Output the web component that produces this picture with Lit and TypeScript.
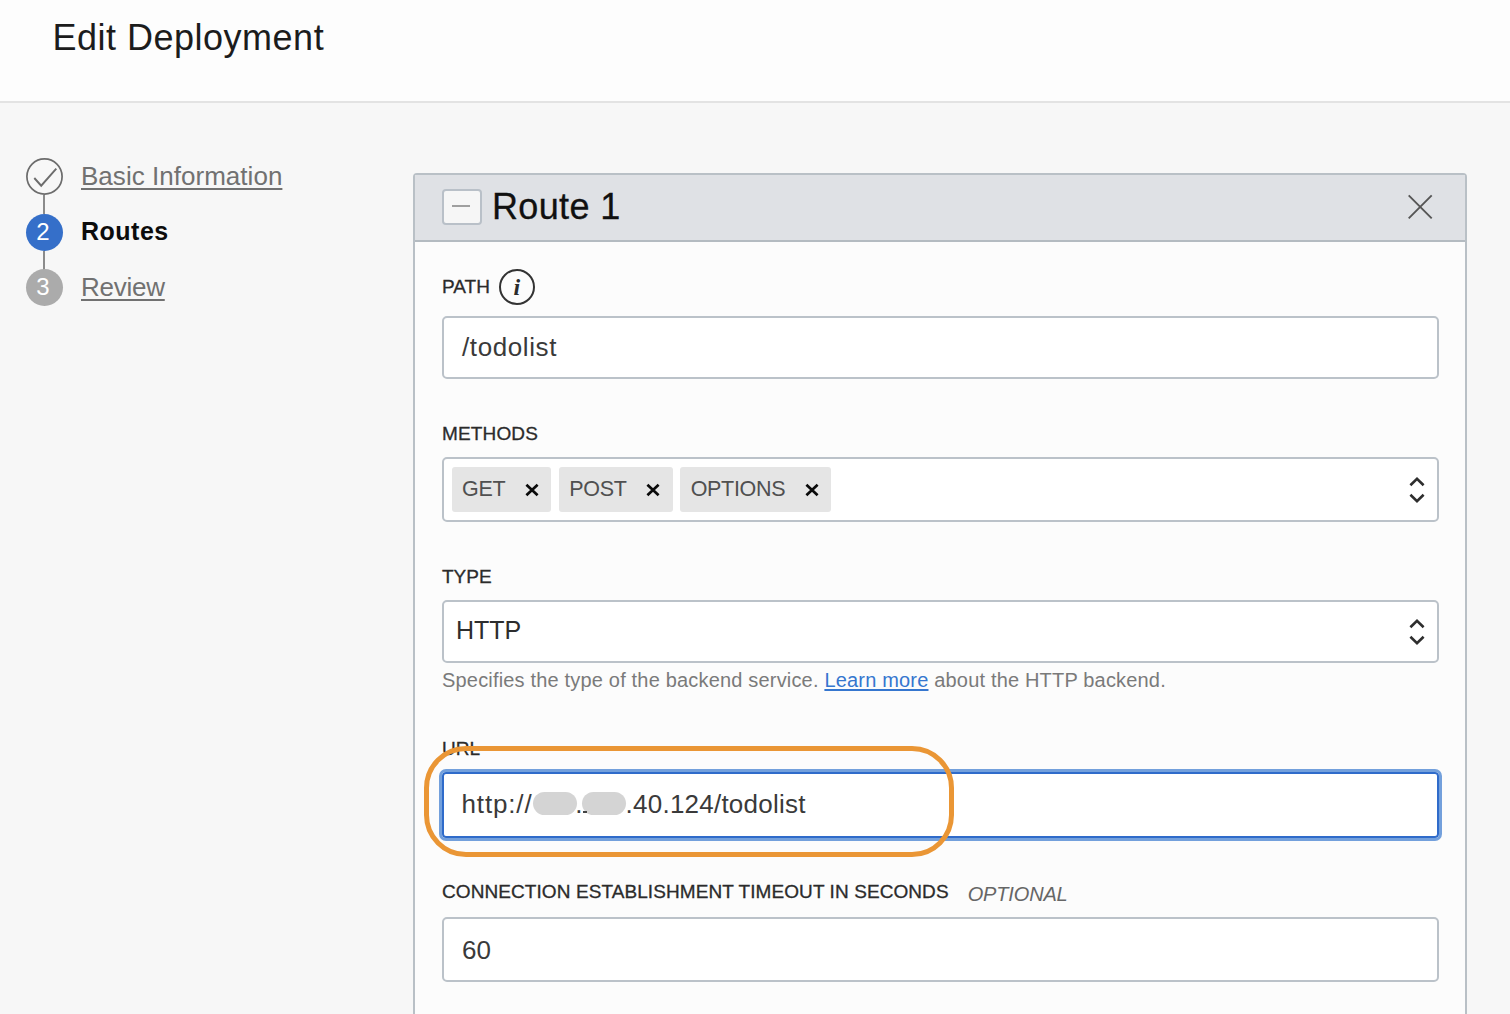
import { LitElement, html, css, svg } from "lit";
import { customElement, property, state } from "lit/decorators.js";
import { classMap } from "lit/directives/class-map.js";

type StepState = "done" | "current" | "todo";
interface Step { label: string; state: StepState; }

@customElement("step-list")
class StepList extends LitElement {
  @property({ attribute: false }) steps: Step[] = [];

  static styles = css`
    :host { display: block; }
    .steps { list-style: none; margin: 0; padding: 0; display: flex; flex-direction: column; gap: 18px; }
    .step { display: flex; align-items: center; gap: 18px; height: 37.5px; position: relative; }
    .step:not(:last-child)::after {
      content: ""; position: absolute; left: 17px; top: 37px; width: 1.5px; height: 19px; background: #8b8b8b;
    }
    .mark {
      width: 37px; height: 37px; border-radius: 50%; box-sizing: border-box; flex: none;
      display: flex; align-items: center; justify-content: center;
      color: #fff; font-size: 24px; line-height: 1; padding: 0 3px 1px 0;
      background: #ababab;
    }
    .done .mark { background: none; padding: 0; }
    .current .mark { background: #356fc9; }
    .mark svg { display: block; }
    .label {
      font-size: 26px; line-height: 30px; letter-spacing: 0.03px; color: #717171; margin-bottom: 2px;
      text-decoration: underline; text-decoration-thickness: 1.5px; text-underline-offset: 3px; text-decoration-skip-ink: none;
    }
    .todo .label { letter-spacing: -0.25px; }
    .current .label { font-size: 25px; letter-spacing: 0.5px; color: #0c0c0c; font-weight: 700; text-decoration: none; }
  `;

  render() {
    return html`<ol class="steps">
      ${this.steps.map((s, i) => html`
        <li class=${classMap({ step: true, [s.state]: true })}>
          <span class="mark">${s.state === "done"
            ? html`<svg width="37" height="37" viewBox="0 0 37 37" fill="none" stroke="#6c6c6c">
                <circle cx="18.5" cy="18.5" r="17.6" stroke-width="1.7"></circle>
                <path d="M8.3 20 L15.2 27.7 L30.3 10.7" stroke-width="1.9"></path>
              </svg>`
            : i + 1}</span>
          <span class="label">${s.label}</span>
        </li>`)}
    </ol>`;
  }
}

const sorter = html`<svg class="sorter" width="18" height="28" viewBox="0 0 18 28" fill="none" stroke="#2e2e2e" stroke-width="2.6">
  ${svg`<path d="M2.4 9.2 L9 2.8 L15.6 9.2 M2.4 18.8 L9 25.2 L15.6 18.8"></path>`}
</svg>`;

@customElement("route-panel")
class RoutePanel extends LitElement {
  @state() private methods = ["GET", "POST", "OPTIONS"];

  static styles = css`
    :host { display: block; }
    .panel { box-sizing: border-box; height: 860px; border: 2px solid #b9c0c6; border-radius: 4px; background: #fcfcfc; }
    .head {
      box-sizing: border-box; height: 67px; border-bottom: 2px solid #b4bbc1; background: #dfe1e5;
      display: flex; align-items: center; padding: 0 32px 1px 27px;
    }
    .fold {
      box-sizing: border-box; width: 40px; height: 36px; border: 2px solid #b9c0c8; border-radius: 4px; background: #f6f6f6;
      display: flex; align-items: center; justify-content: center; margin-right: 10px; padding: 0 2px 2px 0;
    }
    .fold svg, .close { display: block; }
    .title { font-size: 36px; line-height: 40px; letter-spacing: 0.35px; color: #101010; flex: 1; -webkit-text-stroke: 0.3px #101010; }
    .body { padding: 0 26px 0 27px; display: flex; flex-direction: column; }
    .caption { display: flex; align-items: center; font-size: 19px; color: #2b2b2b; line-height: 22px; -webkit-text-stroke: 0.3px #2b2b2b; }
    .path-caption { height: 74px; }
    .path-caption .caption { padding-top: 27px; }
    .info {
      width: 36px; height: 36px; box-sizing: border-box; border: 2px solid #333; border-radius: 50%; margin-left: 9px;
      display: flex; align-items: center; justify-content: center; -webkit-text-stroke: 0;
      font: italic 700 24px/1 "Liberation Serif", serif; color: #2c2c2c;
    }
    .methods { letter-spacing: 0.15px; margin-top: 44px; height: 22px; margin-bottom: 12px; }
    .type { margin-top: 44px; height: 22px; margin-bottom: 12px; }
    .url { margin-top: 47px; height: 22px; margin-bottom: 8.5px; }
    .timeout { margin-top: 40.5px; height: 22px; margin-bottom: 14px; letter-spacing: 0.08px; }
    .optional { font-style: italic; font-size: 20px; color: #666; margin-left: 19px; letter-spacing: -0.15px; padding-top: 3px; -webkit-text-stroke: 0; }
    .box {
      box-sizing: border-box; width: 997px; height: 63px; border: 2px solid #bbc2c9; border-radius: 5px; background: #fff;
      display: flex; align-items: center; padding: 0 11.5px 0 18px; color: #3a3a3a; font-size: 26px;
    }
    .value { letter-spacing: 0.6px; }
    .tags { height: 65px; padding-left: 7.5px; gap: 7.5px; }
    .tag {
      display: flex; align-items: center; gap: 19.5px; height: 45px; padding: 0 12.5px 0 10.5px; border-radius: 3px;
      box-sizing: border-box; background: #e5e5e5; font-size: 21.5px; letter-spacing: -0.3px; color: #505050;
    }
    .tag svg { display: block; }
    .spring { flex: 1; }
    .select { padding-left: 12px; color: #2d2d2d; }
    .select .value { letter-spacing: 0; padding-bottom: 3px; font-size: 25px; }
    .help { font-size: 20px; line-height: 22px; letter-spacing: 0.18px; color: #7a7a7a; margin-top: 6px; white-space: nowrap; }
    .link { color: #3576cf; text-decoration: underline; text-decoration-thickness: 2px; text-underline-offset: 2px; text-decoration-skip-ink: none; }
    .wrap { position: relative; }
    .focused {
      width: 1003.5px; height: 72px; margin-left: -3.5px; padding-left: 20px;
      border: 3px solid #73a0dc; border-radius: 7px; box-shadow: inset 0 0 0 2px #2f6bca;
    }
    .focused .value { letter-spacing: 0.23px; }
    .focused .scheme { letter-spacing: 0.85px; }
    .mask { width: 44px; height: 23px; border-radius: 11.5px; background: #d4d4d4; margin-top: -3px; flex: none; }
    .partial { position: relative; }
    .partial::before { content: ""; position: absolute; left: 1.5px; top: 19.5px; width: 4px; height: 2px; background: #444; }
    .dot { margin: 0 -1.2px; }
    .highlight {
      position: absolute; left: -18px; top: -23px; width: 530px; height: 111.5px; box-sizing: border-box;
      border: 5.5px solid #ea9635; border-radius: 42px; pointer-events: none;
    }
    .timeout-box { height: 65px; }
    .timeout-box .value { padding-top: 2px; letter-spacing: 0; }
  `;

  private remove(m: string) {
    this.methods = this.methods.filter((x) => x !== m);
  }

  render() {
    return html`<section class="panel">
      <header class="head">
        <span class="fold"><svg width="18" height="4" viewBox="0 0 18 4"><path d="M0 2 H18" stroke="#8f8f8f" stroke-width="1.7"></path></svg></span>
        <span class="title">Route 1</span>
        <svg class="close" width="26" height="26" viewBox="0 0 26 26" fill="none" stroke="#555" stroke-width="1.9"><path d="M1.7 1.3 L24.7 24.3 M24.7 1.3 L1.7 24.3"></path></svg>
      </header>
      <div class="body">
        <div class="path-caption"><div class="caption">PATH<span class="info">i</span></div></div>
        <div class="box"><span class="value">/todolist</span></div>

        <div class="caption methods">METHODS</div>
        <div class="box tags">
          ${this.methods.map((m) => html`<span class="tag">${m}
            <svg width="14" height="14" viewBox="0 0 14 14" @click=${() => this.remove(m)}><path d="M1.4 1.8 L12.6 12.2 M12.6 1.8 L1.4 12.2" stroke="#0a0a0a" stroke-width="2.7"></path></svg></span>`)}
          <span class="spring"></span>${sorter}
        </div>

        <div class="caption type">TYPE</div>
        <div class="box select"><span class="value">HTTP</span><span class="spring"></span>${sorter}</div>
        <div class="help">Specifies the type of the backend service. <span class="link">Learn more</span> about the HTTP backend.</div>

        <div class="caption url">URL</div>
        <div class="wrap">
          <div class="box focused">
            <span class="value scheme">http://</span><span class="mask"></span><span class="value dot">.</span><span class="mask partial"></span><span class="value">.40.124/todolist</span>
          </div>
          <div class="highlight"></div>
        </div>

        <div class="caption timeout">CONNECTION ESTABLISHMENT TIMEOUT IN SECONDS<span class="optional">OPTIONAL</span></div>
        <div class="box timeout-box"><span class="value">60</span></div>
      </div>
    </section>`;
  }
}

@customElement("app-root")
class AppRoot extends LitElement {
  private steps: Step[] = [
    { label: "Basic Information", state: "done" },
    { label: "Routes", state: "current" },
    { label: "Review", state: "todo" },
  ];

  static styles = css`
    :host {
      display: flex; flex-direction: column; width: 1510px; height: 1014px; overflow: hidden; background: #f7f7f7;
      font-family: "Liberation Sans", Arial, sans-serif;
    }
    .top { box-sizing: border-box; flex: none; height: 103px; border-bottom: 2px solid #e3e3e3; background: #fdfdfd; padding: 18px 0 0 52.5px; }
    .heading { margin: 0; font-size: 36px; line-height: 40px; font-weight: 400; letter-spacing: 0.5px; color: #1c1c1c; }
    .main { display: flex; flex: 1; min-height: 0; }
    .side { width: 387px; flex: none; padding: 55px 0 0 26px; }
    .content { width: 1054px; flex: none; padding-top: 70px; }
  `;

  render() {
    return html`
      <header class="top"><h1 class="heading">Edit Deployment</h1></header>
      <div class="main">
        <step-list class="side" .steps=${this.steps}></step-list>
        <route-panel class="content"></route-panel>
      </div>`;
  }
}
